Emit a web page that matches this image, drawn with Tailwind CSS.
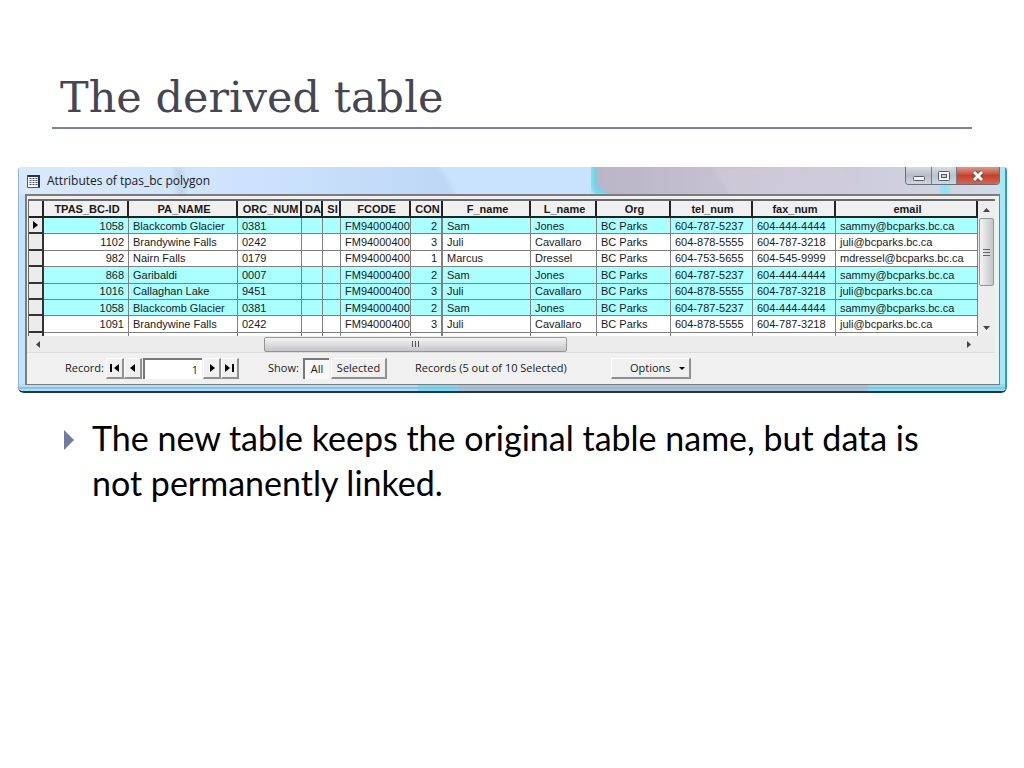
<!doctype html>
<html lang="en">
  <head>
    <meta charset="UTF-8" />
    <meta name="viewport" content="width=device-width, initial-scale=1.0" />
    <script src="https://cdn.jsdelivr.net/npm/@tailwindcss/browser@4"></script>
    <title>The derived table</title>
  </head>
  <body class="min-h-screen bg-white">
    <!-- Slide title -->
    <header class="mx-[52px] border-b-2 border-[#7b80a8] px-2 pt-[71px] pb-1">
      <h1
        class="font-['DejaVu_Serif',serif] text-[43px] leading-[52px] text-[#464653]"
      >
        The derived table
      </h1>
    </header>

    <!-- Attribute window -->
    <section
      class="relative ml-[18px] mr-[17px] mt-[38px] overflow-hidden rounded-t-sm rounded-b-md border-b-2 border-[#1c3a4c] bg-[#c3defa] font-['Open_Sans',sans-serif] text-[11px] text-[#1a1a1a]"
    >
      <svg
        class="absolute inset-0 h-full w-full"
        viewBox="0 0 989 226"
        preserveAspectRatio="none"
        aria-hidden="true"
      >
        <defs>
          <linearGradient id="sky" x1="0" x2="1" y1="0" y2="0">
            <stop offset="0" stop-color="#d9e9fb" />
            <stop offset="0.5" stop-color="#cde3fd" />
            <stop offset="1" stop-color="#bcd6f4" />
          </linearGradient>
          <linearGradient id="mauve" x1="0" x2="1" y1="0" y2="0">
            <stop offset="0" stop-color="#b9b4c6" />
            <stop offset="0.3" stop-color="#c6c1d0" />
            <stop offset="0.6" stop-color="#cdcad9" />
            <stop offset="1" stop-color="#d3dbe8" />
          </linearGradient>
          <filter id="soft"><feGaussianBlur stdDeviation="2" /></filter>
        </defs>
        <rect width="450" height="28" fill="url(#sky)" />
        <path d="M416 -6H584V34H440Q430 10 416 -6Z" fill="#c9e2fe" filter="url(#soft)" />
        <path d="M156 0H164L168 28H158Z" fill="#a9bccf" opacity="0.4" filter="url(#soft)" />
        <path d="M576 0V18Q578 26 592 28H989V0Z" fill="url(#mauve)" />
        <path
          d="M575 -4V17Q577 28 592 30"
          fill="none"
          stroke="#62dcef"
          stroke-width="6"
          filter="url(#soft)"
        />
        <path d="M694 0H824L852 28H712Z" fill="#d0ccda" opacity="0.6" filter="url(#soft)" />
        <rect x="922" y="16" width="10" height="12" fill="#8be4f3" filter="url(#soft)" />
        <rect y="28" width="7" height="198" fill="#c6e2fc" />
        <rect x="982" width="7" height="226" fill="#a5e8fa" />
        <rect y="219" width="400" height="7" fill="#b5dcfb" />
        <rect x="400" y="219" width="40" height="7" fill="#7ed8f4" />
        <rect x="440" y="219" width="410" height="7" fill="#bdb9cd" />
        <rect x="850" y="219" width="139" height="7" fill="#8fdcf2" />
        <path d="M0 223H989" stroke="#7cc8e8" stroke-width="2" />
        <path d="M0 0V226" stroke="#8fb4d6" stroke-width="2" />
        <path d="M988 0V226" stroke="#2f9cb8" stroke-width="2" />
      </svg>

      <!-- Title bar -->
      <div class="relative flex h-[27px] items-center gap-1 pl-[9px] pr-[7px]">
        <svg class="h-4 w-[14px]" viewBox="0 0 14 16" aria-hidden="true">
          <rect x="1" y="2" width="12" height="12" fill="#fff" />
          <path d="M0 3H13M12 2V15" stroke="#26305a" stroke-width="2" />
          <path d="M0.5 2V14.5H13" fill="none" stroke="#4a5684" />
          <path
            d="M3.5 5V13M6.5 5V13M9.5 5V13"
            stroke="#3d4873"
            stroke-width="2"
            stroke-dasharray="1 1"
          />
        </svg>
        <h2 class="pl-[2px] text-[12px] leading-4">Attributes of tpas_bc polygon</h2>
        <div
          class="ml-auto flex h-[18px] self-start overflow-hidden rounded-b-sm border border-t-0 border-[#6a6f7c]"
        >
          <button
            type="button"
            aria-label="Minimize"
            class="flex w-[26px] items-center justify-center border-r border-[#747a86] bg-linear-to-b from-[#d9dbe3] via-[#b9bcc9] to-[#d2d5e0]"
          >
            <svg class="h-[14px] w-4" viewBox="0 0 16 14">
              <rect x="2.5" y="7.5" width="11" height="4" rx="1" fill="#f4f4f6" stroke="#565b68" />
            </svg>
          </button>
          <button
            type="button"
            aria-label="Maximize"
            class="flex w-[25px] items-center justify-center border-r border-[#747a86] bg-linear-to-b from-[#d9dbe3] via-[#b9c4d0] to-[#c4dce6]"
          >
            <svg class="h-[14px] w-4" viewBox="0 0 16 14">
              <rect x="2.5" y="2.5" width="11" height="9" rx="1" fill="#f4f4f6" stroke="#565b68" />
              <rect x="5.5" y="5.5" width="5" height="3" fill="#c3ccd6" stroke="#565b68" />
            </svg>
          </button>
          <button
            type="button"
            aria-label="Close"
            class="flex w-[42px] items-center justify-center bg-linear-to-b from-[#dc9a8c] via-[#c4412b] to-[#d4654e]"
          >
            <svg class="h-[14px] w-4" viewBox="0 0 16 14">
              <path d="M4 3L12 11M12 3L4 11" stroke="#7d4a46" stroke-width="5" />
              <path d="M4 3L12 11M12 3L4 11" stroke="#fff" stroke-width="3" />
            </svg>
          </button>
        </div>
      </div>

      <!-- Client area -->
      <div
        class="relative mx-[7px] mb-[6px] border border-t-2 border-l-2 border-[#7c7c7c] bg-[#f0f0f0]"
      >
        <div class="ml-[1px] mr-1 mt-[3px] flex border-t-2 border-l border-[#696969]">
          <div class="h-[135px] min-w-0 flex-1 overflow-hidden bg-white">
            <table
              class="h-[148px] w-full table-fixed border-separate border-spacing-0 font-['Liberation_Sans',sans-serif] text-[11px] leading-[14px] whitespace-nowrap"
            >
              <colgroup>
                <col class="w-[15px]" />
                <col class="w-[85px]" />
                <col class="w-[109px]" />
                <col class="w-[64px]" />
                <col class="w-[21px]" />
                <col class="w-[18px]" />
                <col class="w-[70px]" />
                <col class="w-[32px]" />
                <col class="w-[88px]" />
                <col class="w-[66px]" />
                <col class="w-[74px]" />
                <col class="w-[82px]" />
                <col class="w-[83px]" />
                <col class="w-[142px]" />
              </colgroup>
              <thead>
                <tr id="head" class="h-[17px] bg-[#f0f0f0]"></tr>
              </thead>
              <tbody id="rows"></tbody>
            </table>
          </div>

          <!-- Vertical scrollbar -->
          <div class="flex w-[17px] flex-col items-center bg-[#ededed]">
            <button type="button" aria-label="Scroll up" class="flex h-[17px] items-center">
              <svg class="h-1 w-[7px]" viewBox="0 0 7 4"><path d="M0 4L3.5 0L7 4Z" fill="#444" /></svg>
            </button>
            <div
              class="flex h-[68px] w-[15px] flex-col items-center justify-center gap-[2px] rounded-xs border border-[#969696] bg-linear-to-r from-[#f4f4f4] to-[#c4c4c8]"
            >
              <span class="h-px w-[7px] bg-[#666]"></span>
              <span class="h-px w-[7px] bg-[#666]"></span>
              <span class="h-px w-[7px] bg-[#666]"></span>
            </div>
            <button
              type="button"
              aria-label="Scroll down"
              class="mt-auto flex h-[17px] items-center"
            >
              <svg class="h-1 w-[7px]" viewBox="0 0 7 4"><path d="M0 0L3.5 4L7 0Z" fill="#444" /></svg>
            </button>
          </div>
        </div>

        <!-- Horizontal scrollbar -->
        <div class="mr-1 flex h-[17px] items-center border-b border-[#dcdcdc] bg-[#ebebeb] pl-[9px] pr-6">
          <button type="button" aria-label="Scroll left">
            <svg class="h-[7px] w-1" viewBox="0 0 4 7"><path d="M4 0L0 3.5L4 7Z" fill="#444" /></svg>
          </button>
          <div class="flex flex-1 justify-start pl-[24%]">
            <div
              class="flex h-[15px] w-[43%] items-center justify-center gap-[2px] rounded-xs border border-[#969696] bg-linear-to-b from-[#f4f4f4] to-[#c6c6c9]"
            >
              <span class="h-[6px] w-px bg-[#555]"></span>
              <span class="h-[6px] w-px bg-[#555]"></span>
              <span class="h-[6px] w-px bg-[#555]"></span>
            </div>
          </div>
          <button type="button" aria-label="Scroll right">
            <svg class="h-[7px] w-1" viewBox="0 0 4 7"><path d="M0 0L4 3.5L0 7Z" fill="#444" /></svg>
          </button>
        </div>

        <!-- Record toolbar -->
        <div class="flex h-[31px] items-center pl-[38px]">
          <label for="record" class="w-[41px]">Record:</label>
          <button
            type="button"
            aria-label="First record"
            class="flex h-[21px] w-[18px] items-center justify-center border-r-2 border-b-2 border-t border-l border-t-white border-l-white border-[#909090]"
          >
            <svg class="h-2 w-[10px]" viewBox="0 0 10 8"><path d="M0 0H2V8H0ZM9 0V8L4 4Z" fill="#000" /></svg>
          </button>
          <button
            type="button"
            aria-label="Previous record"
            class="flex h-[21px] w-[18px] items-center justify-center border-r-2 border-b-2 border-t border-l border-t-white border-l-white border-[#909090]"
          >
            <svg class="h-2 w-[6px]" viewBox="0 0 6 8"><path d="M5 0V8L0 4Z" fill="#000" /></svg>
          </button>
          <input
            id="record"
            type="text"
            value="1"
            class="mx-px h-[21px] w-[59px] border-t-2 border-l-2 border-[#777] bg-white pr-1 text-right"
          />
          <button
            type="button"
            aria-label="Next record"
            class="flex h-[21px] w-[18px] items-center justify-center border-r-2 border-b-2 border-t border-l border-t-white border-l-white border-[#909090]"
          >
            <svg class="h-2 w-[6px]" viewBox="0 0 6 8"><path d="M1 0V8L6 4Z" fill="#000" /></svg>
          </button>
          <button
            type="button"
            aria-label="Last record"
            class="flex h-[21px] w-[18px] items-center justify-center border-r-2 border-b-2 border-t border-l border-t-white border-l-white border-[#909090]"
          >
            <svg class="h-2 w-[10px]" viewBox="0 0 10 8"><path d="M0 0V8L5 4ZM7 0H9V8H7Z" fill="#000" /></svg>
          </button>
          <span class="ml-[29px] w-[35px]">Show:</span>
          <button
            type="button"
            class="h-[21px] w-[26px] border-t-2 border-l-2 border-[#777] bg-[#f8f8f8]"
          >
            All
          </button>
          <button
            type="button"
            class="ml-[2px] h-[21px] w-[56px] border-r-2 border-b-2 border-t border-l border-t-white border-l-white border-[#909090]"
          >
            Selected
          </button>
          <p class="ml-7 w-[196px] whitespace-nowrap">Records (5 out of 10 Selected)</p>
          <button
            type="button"
            class="flex h-[21px] w-[80px] items-center justify-between border-r-2 border-b-2 border-t border-l border-t-white border-l-white border-[#909090] pl-[18px] pr-1"
          >
            Options
            <svg class="h-[3px] w-[6px]" viewBox="0 0 6 3"><path d="M0 0H6L3 3Z" fill="#000" /></svg>
          </button>
        </div>
      </div>
    </section>

    <!-- Slide text -->
    <ul class="mt-[22px] pl-16 pr-20">
      <li class="flex">
        <svg class="mt-[15px] h-5 w-[10px] shrink-0" viewBox="0 0 10 20" aria-hidden="true">
          <path d="M0 0L10 10L0 20Z" fill="#727ca3" />
        </svg>
        <p class="ml-[18px] font-['Gill_Sans_MT',Lato,sans-serif] text-[34px] leading-[45px] text-black">
          The new table keeps the original table name, but data is not
          permanently linked.
        </p>
      </li>
    </ul>

    <script>
      const columns = [
        "TPAS_BC-ID", "PA_NAME", "ORC_NUM", "DA", "SI", "FCODE", "CON",
        "F_name", "L_name", "Org", "tel_num", "fax_num", "email",
      ];

      const sam = ["2", "Sam", "Jones", "BC Parks", "604-787-5237", "604-444-4444", "sammy@bcparks.bc.ca"];
      const juli = ["3", "Juli", "Cavallaro", "BC Parks", "604-878-5555", "604-787-3218", "juli@bcparks.bc.ca"];
      const marcus = ["1", "Marcus", "Dressel", "BC Parks", "604-753-5655", "604-545-9999", "mdressel@bcparks.bc.ca"];

      const records = [
        { park: ["1058", "Blackcomb Glacier", "0381"], contact: sam, selected: true },
        { park: ["1102", "Brandywine Falls", "0242"], contact: juli },
        { park: ["982", "Nairn Falls", "0179"], contact: marcus },
        { park: ["868", "Garibaldi", "0007"], contact: sam, selected: true },
        { park: ["1016", "Callaghan Lake", "9451"], contact: juli, selected: true },
        { park: ["1058", "Blackcomb Glacier", "0381"], contact: sam, selected: true },
        { park: ["1091", "Brandywine Falls", "0242"], contact: juli },
      ];

      const headClass =
        "overflow-hidden border-r-2 border-b-2 border-[#222] py-0 pl-[3px] pr-0 text-center font-bold";
      const markerClass =
        "border-r-2 border-b-2 border-[#333] bg-[#ececec] p-0";
      const cellClass =
        "overflow-hidden border-r border-b border-[#808080] py-0 pl-1 pr-0 text-left";
      const numberClass =
        "overflow-hidden border-r border-b border-[#808080] py-0 pl-0 pr-1 text-right";
      const joinClass =
        "overflow-hidden border-r-2 border-b border-[#808080] py-0 pl-0 pr-1 text-right";

      const marker =
        '<svg class="mx-auto h-2 w-[5px]" viewBox="0 0 5 8"><path d="M0 0L5 4L0 8Z" fill="#000"/></svg>';

      function classFor(index) {
        if (index === 0) return numberClass;
        // the joined table starts after CON
        if (index === 6) return joinClass;
        return cellClass;
      }

      document.getElementById("head").innerHTML =
        `<td class="${headClass}"></td>` +
        columns.map((name) => `<th class="${headClass}">${name}</th>`).join("");

      const body = records.map((record, i) => {
        const values = [...record.park, "", "", "FM94000400", ...record.contact];
        const cells = values
          .map((value, index) => `<td class="${classFor(index)}">${value}</td>`)
          .join("");
        return `<tr class="${record.selected ? "bg-[#aaffff]" : "bg-white"}"><td class="${markerClass}">${i === 0 ? marker : ""}</td>${cells}</tr>`;
      });

      // row cut off by the scrollbar
      const rest = columns
        .map((name, index) => `<td class="${classFor(index)}">&nbsp;</td>`)
        .join("");
      body.push(`<tr class="bg-white"><td class="${markerClass}"></td>${rest}</tr>`);

      document.getElementById("rows").innerHTML = body.join("");
    </script>
  </body>
</html>
